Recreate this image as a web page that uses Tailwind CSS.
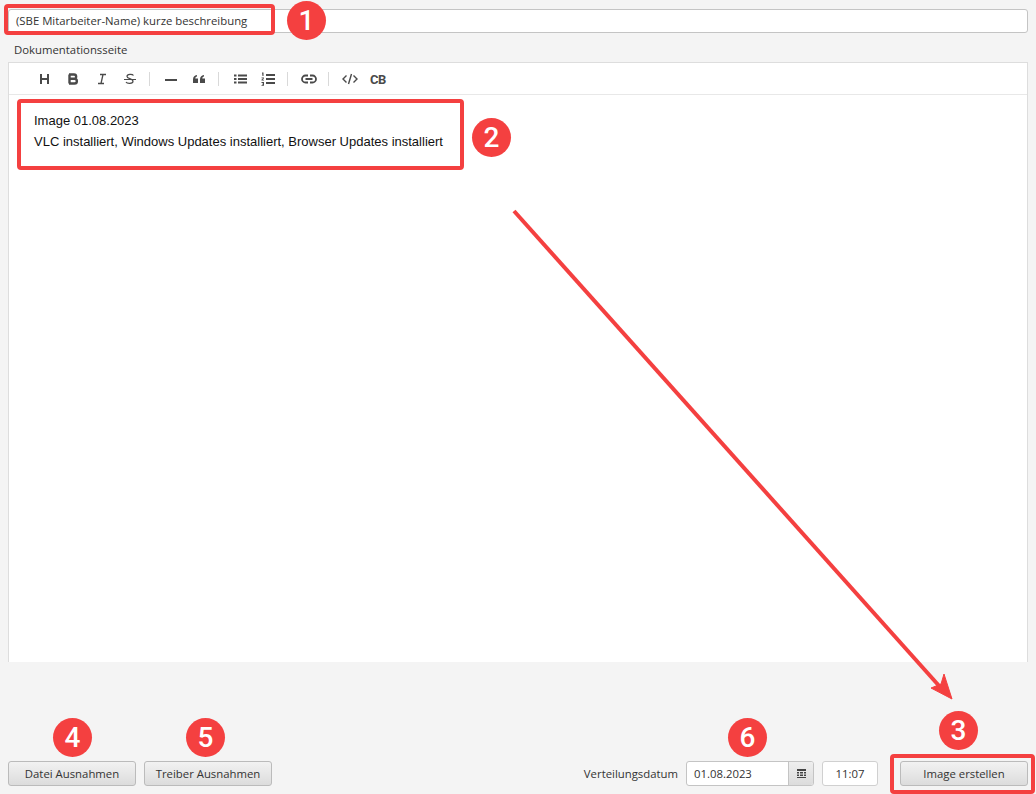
<!DOCTYPE html>
<html lang="de">
<head>
  <meta charset="UTF-8" />
  <title>Image erstellen</title>
  <script src="https://cdn.jsdelivr.net/npm/@tailwindcss/browser@4"></script>
</head>
<body class="relative w-[1036px] h-[794px] overflow-hidden bg-[#f4f4f4] font-['Open_Sans',sans-serif] text-[11.35px] text-[#333]">

  <!-- Main form -->
  <div class="flex flex-col h-full pt-[9px] px-[8px]">
    <div class="h-[24px] shrink-0 bg-white border border-[#c4c4c4] rounded-[3px] px-[7px] flex items-center">(SBE Mitarbeiter-Name) kurze beschreibung</div>
    <div class="h-[29px] shrink-0 pl-[6px] pt-[9px] leading-[15px]">Dokumentationsseite</div>

    <!-- Editor -->
    <div class="h-[600px] shrink-0 bg-white border-x border-t border-[#ddd]">
      <div class="h-[32px] border-b border-[#e8e8e8] flex items-center pl-[28px] text-[#4a4a4a]">
        <svg class="w-[14px] h-[14px] mr-[15px]" viewBox="0 0 14 14" fill="none" stroke="#4a4a4a" stroke-width="2"><path d="M4 2v10M11 2v10M4 7h7"/></svg>
        <svg class="w-[14px] h-[14px] mr-[15px]" viewBox="0 0 14 14" fill="none" stroke="#4a4a4a" stroke-width="2.4"><path d="M3.500 2.500v9M3 2.500h5a2 2 0 0 1 0 4.300H3M3 6.800h5.500a2.300 2.300 0 0 1 0 4.700H3"/></svg>
        <svg class="w-[14px] h-[14px] mr-[14px]" viewBox="0 0 14 14" fill="none" stroke="#4a4a4a" stroke-width="1.300"><path d="M5 2.500h6M3 11.500h6M8 2.500l-2 9"/></svg>
        <svg class="w-[14px] h-[14px] mr-[12px]" viewBox="0 0 14 14" fill="none" stroke="#4a4a4a" stroke-width="1.200"><path d="M1 7.500h12M10.500 3.500C9.500 2 4 1.800 4 4.500c0 2.200 6 2 6 4.700 0 2.800-6 2.600-7 .8"/></svg>
        <div class="w-px h-[14px] bg-[#d9d9d9] mr-[14px]"></div>
        <svg class="w-[14px] h-[14px] mr-[14px]" viewBox="0 0 14 14" fill="#4a4a4a"><path d="M1 7h12v2H1z"/></svg>
        <svg class="w-[14px] h-[14px] mr-[12px]" viewBox="0 0 14 14" fill="#4a4a4a"><path d="M1 11V7.500C1 5 2.300 3.500 5 3v1.500C3.800 4.800 3.300 5.500 3.300 6.500H6V11zM8 11V7.500C8 5 9.300 3.500 12 3v1.500c-1.200.3-1.700 1-1.700 2H13V11z"/></svg>
        <div class="w-px h-[14px] bg-[#d9d9d9] mr-[15px]"></div>
        <svg class="w-[14px] h-[14px] mr-[13px]" viewBox="0 0 14 14" fill="#4a4a4a"><path d="M0 2.500h2.500v2H0zM4 2.500h9v2H4zM0 6h2.500v2H0zM4 6h9v2H4zM0 9.500h2.500v2H0zM4 9.500h9v2H4z"/></svg>
        <svg class="w-[14px] h-[14px] mr-[12px]" viewBox="0 0 14 14" fill="#4a4a4a"><path d="M5 2h9v2H5zM5 6h9v2H5zM5 10h9v2H5zM1 .5h1.500v3.500h-1zM.5 5.500h2.500v.8L1.600 7.800H3v.8H.5v-.8L2 6.300H.5zM.5 10h2.500v3.800H.5V13H2v-.6H1v-.7h1v-.8H.5z"/></svg>
        <div class="w-px h-[14px] bg-[#d9d9d9] mr-[13px]"></div>
        <svg class="w-[16px] h-[14px] mr-[11px]" viewBox="0 0 16 14" fill="none" stroke="#4a4a4a" stroke-width="1.800"><path d="M7 3.500H4.500a3.500 3.500 0 0 0 0 7H7M9 3.500h2.500a3.500 3.500 0 0 1 0 7H9M4.500 7h7"/></svg>
        <div class="w-px h-[14px] bg-[#d9d9d9] mr-[13px]"></div>
        <svg class="w-[16px] h-[14px] mr-[12px]" viewBox="0 0 16 14" fill="none" stroke="#4a4a4a" stroke-width="1.400"><path d="M4.500 3.500L1 7l3.500 3.500M11.500 3.500L15 7l-3.500 3.500M9.500 2l-3 10"/></svg>
        <span class="pt-[2px] font-['Roboto',sans-serif] font-bold text-[13px] tracking-[-0.5px] leading-none">CB</span>
      </div>
      <div class="pl-[25px] pt-[16px] font-['Liberation_Sans',sans-serif] text-[13px] leading-[20.5px] text-[#111]">
        <p>Image 01.08.2023</p>
        <p>VLC installiert, Windows Updates installiert, Browser Updates installiert</p>
      </div>
    </div>

    <!-- Bottom bar -->
    <div class="mt-[99px] h-[25px] flex items-center">
      <button class="w-[128px] h-[25px] rounded-[3px] border border-[#bbb] bg-gradient-to-b from-[#f2f2f2] to-[#dcdcdc] text-[#333]">Datei Ausnahmen</button>
      <button class="ml-[8px] w-[128px] h-[25px] rounded-[3px] border border-[#bbb] bg-gradient-to-b from-[#f2f2f2] to-[#dcdcdc] text-[#333]">Treiber Ausnahmen</button>
      <span class="ml-auto mr-[8px]">Verteilungsdatum</span>
      <div class="w-[128px] h-[25px] flex rounded-[3px] border border-[#c4c4c4] bg-white overflow-hidden">
        <span class="flex-1 pl-[7px] leading-[23px]">01.08.2023</span>
        <span class="w-[25px] border-l border-[#c4c4c4] bg-gradient-to-b from-[#eee] to-[#dcdcdc] flex items-center justify-center">
          <svg class="w-[9px] h-[9px]" viewBox="0 0 9 9" fill="#444"><path d="M0 0h9v2H0zM0 3h2v1.500H0zM3 3h3v1.500H3zM7 3h2v1.500H7zM0 5.500h2V7H0zM3 5.500h3V7H3zM7 5.500h2V7H7zM0 8h9v1H0z"/></svg>
        </span>
      </div>
      <div class="ml-[8px] w-[56px] h-[25px] rounded-[3px] border border-[#d0d0d0] bg-white text-center leading-[23px]">11:07</div>
      <button class="ml-[22px] w-[128px] h-[25px] rounded-[3px] border border-[#bbb] bg-gradient-to-b from-[#f2f2f2] to-[#dcdcdc] text-[#333]">Image erstellen</button>
    </div>
  </div>

  <!-- Annotation overlay -->
  <div class="absolute left-[4px] top-[4px] w-[271px] h-[31px] border-[4px] border-[#f44040] rounded-[4px]"></div>
  <div class="absolute left-[17px] top-[99px] w-[447px] h-[71px] border-[4px] border-[#f44040] rounded-[4px]"></div>
  <div class="absolute left-[890px] top-[754px] w-[145px] h-[40px] border-[4px] border-[#f44040] rounded-[4px]"></div>

  <svg class="absolute left-0 top-0 pointer-events-none" width="1036" height="794" fill="none">
    <path d="M514 211L941 688" stroke="#f44040" stroke-width="4"/>
    <path d="M952 699L931 688L941 684L944 674Z" fill="#f44040" stroke="#f44040" stroke-width="1"/>
  </svg>

  <div class="absolute left-[287px] top-[1px] w-[39px] h-[39px] rounded-full bg-[#f44040] text-white font-['Roboto',sans-serif] font-medium text-[28px] flex items-center justify-center">1</div>
  <div class="absolute left-[472px] top-[118px] w-[39px] h-[39px] rounded-full bg-[#f44040] text-white font-['Roboto',sans-serif] font-medium text-[28px] flex items-center justify-center">2</div>
  <div class="absolute left-[939px] top-[711px] w-[39px] h-[39px] rounded-full bg-[#f44040] text-white font-['Roboto',sans-serif] font-medium text-[28px] flex items-center justify-center">3</div>
  <div class="absolute left-[53px] top-[718px] w-[39px] h-[39px] rounded-full bg-[#f44040] text-white font-['Roboto',sans-serif] font-medium text-[28px] flex items-center justify-center">4</div>
  <div class="absolute left-[186px] top-[718px] w-[39px] h-[39px] rounded-full bg-[#f44040] text-white font-['Roboto',sans-serif] font-medium text-[28px] flex items-center justify-center">5</div>
  <div class="absolute left-[728px] top-[718px] w-[39px] h-[39px] rounded-full bg-[#f44040] text-white font-['Roboto',sans-serif] font-medium text-[28px] flex items-center justify-center">6</div>
</body>
</html>
